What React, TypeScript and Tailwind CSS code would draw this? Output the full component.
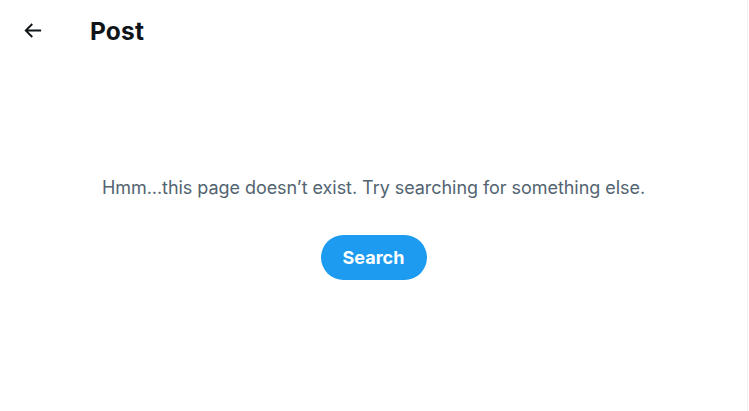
const BackArrow = () => (
  <svg viewBox="0 0 24 24" className="h-[23px] w-[23px] fill-[#0f1419]">
    <path d="M7.414 13l5.043 5.04-1.414 1.42L3.586 12l7.457-7.46 1.414 1.42L7.414 11H21v2H7.414z" />
  </svg>
);

const App = () => {
  return (
    <div className="min-h-[411px] w-[749px] bg-white font-['Inter',sans-serif]">
      <div className="min-h-[411px] w-[748px] border-r border-[#eff3f4]">
        <div className="flex h-[61px] items-center">
          <div className="flex w-[90px] items-center pl-[21px]">
            <BackArrow />
          </div>
          <h2 className="text-[24.5px] font-bold leading-[28px] tracking-[0.2px] text-[#0f1419]">Post</h2>
        </div>
        <div className="flex flex-col items-center pt-[115px]">
          <p className="text-[18px] leading-[23px] tracking-[-0.05px] text-[#536471]">
            Hmm...this page doesn’t exist. Try searching for something else.
          </p>
          <button className="mt-[36px] h-[45px] w-[106px] rounded-full bg-[#1d9bf0] text-[18px] font-bold text-white">
            Search
          </button>
        </div>
      </div>
    </div>
  );
};

export default App;
